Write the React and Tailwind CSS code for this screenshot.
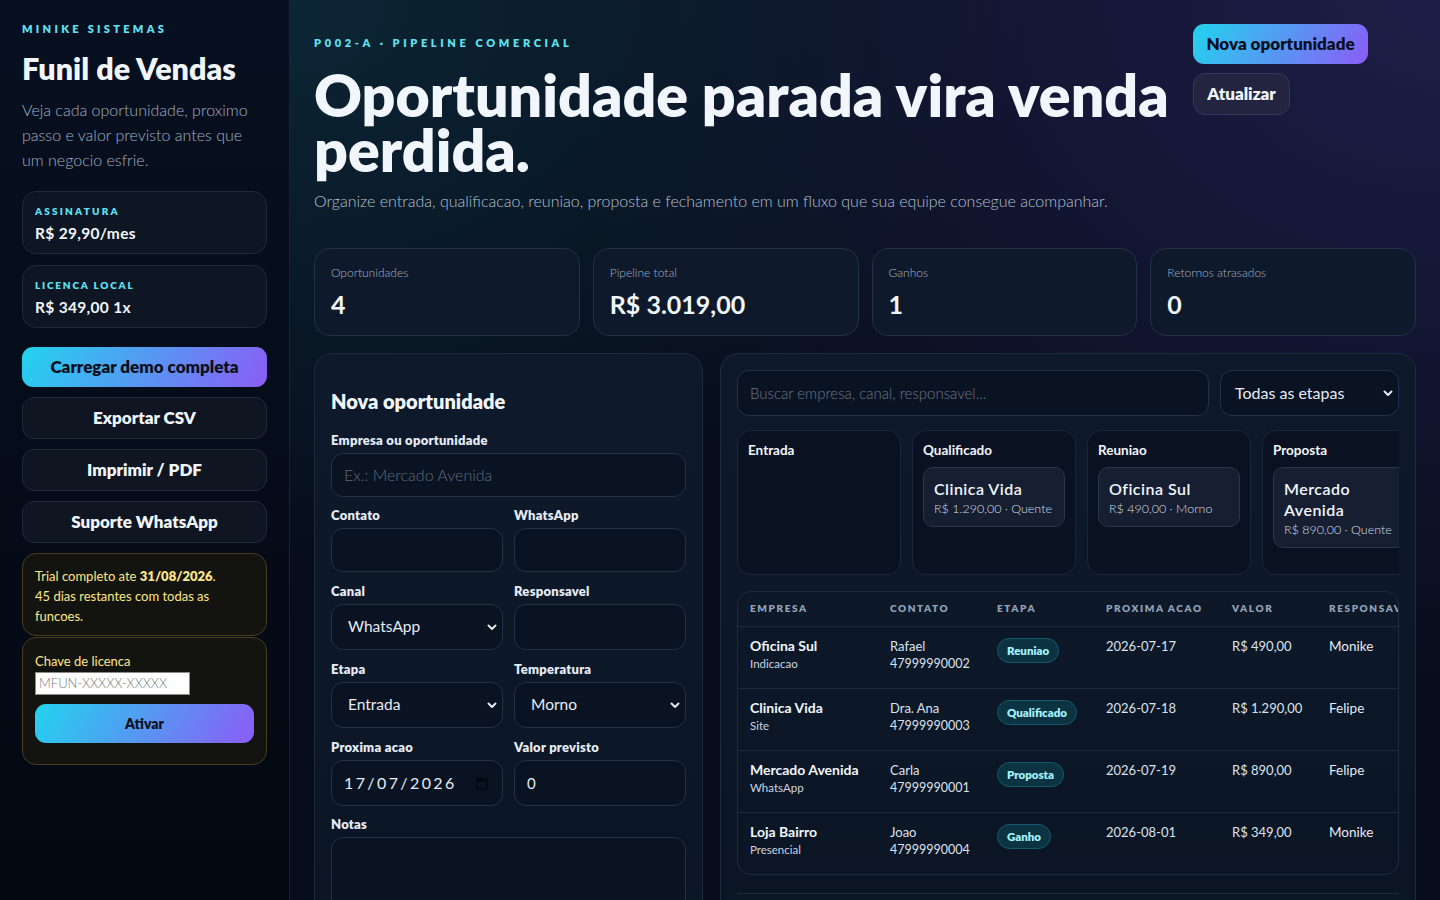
import React from "react";

const stats = [
  { label: "Oportunidades", value: "4" },
  { label: "Pipeline total", value: "R$ 3.019,00" },
  { label: "Ganhos", value: "1" },
  { label: "Retornos atrasados", value: "0" },
];

const columns = [
  { title: "Entrada", cards: [] },
  { title: "Qualificado", cards: [{ name: "Clinica Vida", meta: "R$ 1.290,00 · Quente" }] },
  { title: "Reuniao", cards: [{ name: "Oficina Sul", meta: "R$ 490,00 · Morno" }] },
  { title: "Proposta", cards: [{ name: "Mercado Avenida", meta: "R$ 890,00 · Quente" }] },
];

const rows = [
  { empresa: "Oficina Sul", canal: "Indicacao", contato: "Rafael", fone: "47999990002", etapa: "Reuniao", data: "2026-07-17", valor: "R$ 490,00", resp: "Monike" },
  { empresa: "Clinica Vida", canal: "Site", contato: "Dra. Ana", fone: "47999990003", etapa: "Qualificado", data: "2026-07-18", valor: "R$ 1.290,00", resp: "Felipe" },
  { empresa: "Mercado Avenida", canal: "WhatsApp", contato: "Carla", fone: "47999990001", etapa: "Proposta", data: "2026-07-19", valor: "R$ 890,00", resp: "Felipe" },
  { empresa: "Loja Bairro", canal: "Presencial", contato: "Joao", fone: "47999990004", etapa: "Ganho", data: "2026-08-01", valor: "R$ 349,00", resp: "Monike" },
];

function Chevron() {
  return (
    <svg width="10" height="7" viewBox="0 0 10 7" fill="none" className="shrink-0">
      <path d="M1.5 1.5L5 5l3.5-3.5" stroke="#e5e7eb" strokeWidth="2" strokeLinecap="round" strokeLinejoin="round" />
    </svg>
  );
}

function CalendarIcon() {
  return (
    <svg width="12" height="13" viewBox="0 0 12 13" fill="none">
      <rect x="1" y="2" width="10" height="10" stroke="#05070c" strokeWidth="1.4" />
      <rect x="1" y="2" width="10" height="2.5" fill="#05070c" />
    </svg>
  );
}

function Label({ children }) {
  return <div className="text-[13px] leading-[16px] font-extrabold tracking-[0.02em] text-[#e5ecf5]">{children}</div>;
}

function TextField({ label, placeholder, value, h = "h-[44px]" }) {
  return (
    <div className="flex flex-col gap-[5px]">
      <Label>{label}</Label>
      <div className={`${h} rounded-[12px] border border-[#243247] bg-[#0a1322] px-[12px] flex items-center text-[15px]`}>
        {placeholder ? (
          <span className="text-[16px] font-light text-[#5f6b7e]">{placeholder}</span>
        ) : (
          <span className="text-[#e5ecf5]">{value}</span>
        )}
      </div>
    </div>
  );
}

function SelectField({ label, value }) {
  return (
    <div className="flex flex-col gap-[5px]">
      <Label>{label}</Label>
      <div className="h-[46px] rounded-[12px] border border-[#243247] bg-[#0a1322] pl-[16px] pr-[5px] flex items-center justify-between text-[15.5px] text-[#e5ecf5]">
        <span>{value}</span>
        <Chevron />
      </div>
    </div>
  );
}

function Sidebar() {
  return (
    <aside className="w-[290px] shrink-0 h-full border-r border-[#182231] bg-[linear-gradient(180deg,#071020,#030912)] px-[22px] pt-[21px] flex flex-col">
      <div className="text-[11px] leading-[16px] font-extrabold tracking-[0.3em] text-[#5fe3f3]">MINIKE SISTEMAS</div>
      <h1 className="mt-[13px] text-[30.5px] leading-[36px] font-extrabold text-[#f1f6fc]">Funil de Vendas</h1>
      <p className="mt-[11px] text-[16px] leading-[25px] font-light text-[#a2afc2]">
        Veja cada oportunidade, proximo passo e valor previsto antes que um negocio esfrie.
      </p>

      <div className="mt-[19px] rounded-[14px] border border-[#1f2a3a] bg-[#0e1623] px-[12px] pt-[12px] pb-[10px]">
        <div className="text-[10px] leading-[14px] font-extrabold tracking-[0.22em] text-[#5fe3f3]">ASSINATURA</div>
        <div className="mt-[5px] text-[15.5px] leading-[20px] font-bold tracking-[0.02em] text-[#f1f6fc]">R$ 29,90/mes</div>
      </div>
      <div className="mt-[11px] rounded-[14px] border border-[#1f2a3a] bg-[#0e1623] px-[12px] pt-[12px] pb-[10px]">
        <div className="text-[10px] leading-[14px] font-extrabold tracking-[0.18em] text-[#5fe3f3]">LICENCA LOCAL</div>
        <div className="mt-[5px] text-[15.5px] leading-[20px] font-bold tracking-[0.02em] text-[#f1f6fc]">R$ 349,00 1x</div>
      </div>

      <button className="mt-[19px] h-[40px] rounded-[11px] bg-[linear-gradient(120deg,#22d3ee,#8b5cf6)] text-[17px] font-extrabold text-[#0a1020]">
        Carregar demo completa
      </button>
      {["Exportar CSV", "Imprimir / PDF", "Suporte WhatsApp"].map((t) => (
        <button
          key={t}
          className="mt-[10px] h-[42px] rounded-[12px] border border-[#1f2a3a] bg-[#0f1622] text-[17px] font-extrabold text-[#f1f6fc]"
        >
          {t}
        </button>
      ))}

      <div className="mt-[10px] rounded-[14px] border border-[#4a3d1c] bg-[#13140f] px-[12px] pt-[12px] pb-[9px] text-[13px] leading-[20px] text-[#fde68a]">
        Trial completo ate <b className="font-extrabold">31/08/2026</b>.
        <br />
        45 dias restantes com todas as funcoes.
      </div>
      <div className="mt-[1px] rounded-[14px] border border-[#4a3d1c] bg-[#13140f] px-[12px] pt-[13px] pb-[21px]">
        <div className="text-[13px] leading-[20px] text-[#fde68a]">Chave de licenca</div>
        <div className="mt-[1px] h-[23px] w-[155px] border border-[#8a8a8a] bg-white px-[3px] flex items-center text-[13px] font-light text-[#7a7a7a]">
          MFUN-XXXXX-XXXXX
        </div>
        <button className="mt-[9px] w-full h-[39px] rounded-[11px] bg-[linear-gradient(120deg,#22d3ee,#8b5cf6)] text-[14px] font-extrabold text-[#0a1020]">
          Ativar
        </button>
      </div>
    </aside>
  );
}

function Header() {
  return (
    <div className="flex gap-[20px]">
      <div className="flex-1 min-w-0 pt-[11px]">
        <div className="text-[11px] leading-[16px] font-extrabold tracking-[0.33em] text-[#5fe3f3]">P002-A · PIPELINE COMERCIAL</div>
        <h2 className="mt-[16px] text-[59px] leading-[55px] font-extrabold text-[#f1f6fc]">
          Oportunidade parada vira venda perdida.
        </h2>
        <p className="mt-[12px] text-[16px] leading-[24px] font-light text-[#b4c0d0]">
          Organize entrada, qualificacao, reuniao, proposta e fechamento em um fluxo que sua equipe consegue acompanhar.
        </p>
      </div>
      <div className="w-[223px] shrink-0 flex flex-col items-start gap-[9px]">
        <button className="h-[40px] w-[175px] rounded-[11px] bg-[linear-gradient(120deg,#22d3ee,#8b5cf6)] text-[17px] font-extrabold text-[#0a1020]">
          Nova oportunidade
        </button>
        <button className="h-[42px] w-[97px] rounded-[12px] border border-[#34365a] bg-[#23243f] text-[17px] font-extrabold text-[#f1f6fc]">
          Atualizar
        </button>
      </div>
    </div>
  );
}

function Stats() {
  return (
    <div className="mt-[35px] grid grid-cols-4 gap-[13px]">
      {stats.map((s) => (
        <div key={s.label} className="h-[88px] rounded-[16px] border border-[#223047] bg-[#0e1a2b] px-[16px] pt-[16px]">
          <div className="text-[12px] leading-[16px] font-light text-[#a5b1c2]">{s.label}</div>
          <div className="mt-[8px] text-[25px] leading-[30px] font-bold text-[#f1f6fc]">{s.value}</div>
        </div>
      ))}
    </div>
  );
}

function FormPanel() {
  return (
    <div className="rounded-[18px] border border-[#1f2b3d] bg-[linear-gradient(180deg,#0e1a2b,#0b1524)] px-[16px] pt-[34px] pb-[20px]">
      <h3 className="text-[20px] leading-[26px] font-extrabold text-[#f1f6fc]">Nova oportunidade</h3>
      <div className="mt-[18px] flex flex-col gap-[10px]">
        <TextField label="Empresa ou oportunidade" placeholder="Ex.: Mercado Avenida" />
        <div className="grid grid-cols-2 gap-x-[11px] gap-y-[11px]">
          <TextField label="Contato" value="" />
          <TextField label="WhatsApp" value="" />
          <SelectField label="Canal" value="WhatsApp" />
          <TextField label="Responsavel" value="" h="h-[46px]" />
          <SelectField label="Etapa" value="Entrada" />
          <SelectField label="Temperatura" value="Morno" />
          <div className="flex flex-col gap-[5px]">
            <Label>Proxima acao</Label>
            <div className="h-[46px] rounded-[12px] border border-[#243247] bg-[#0a1322] pl-[12px] pr-[14px] flex items-center justify-between text-[16px] text-[#e5ecf5]">
              <span className="tracking-[0.15em]">17/07/2026</span>
              <CalendarIcon />
            </div>
          </div>
          <TextField label="Valor previsto" value="0" h="h-[46px]" />
        </div>
        <div className="flex flex-col gap-[5px]">
          <Label>Notas</Label>
          <div className="h-[110px] rounded-[12px] border border-[#243247] bg-[#0a1322]" />
        </div>
      </div>
    </div>
  );
}

function Badge({ children }) {
  return (
    <span className="inline-flex h-[25px] items-center rounded-full border border-[#175a6c] bg-[#0b3342] px-[9px] text-[11.5px] font-extrabold text-[#a5f3fc]">
      {children}
    </span>
  );
}

function BoardPanel() {
  return (
    <div className="rounded-[18px] border border-[#1f2b3d] bg-[linear-gradient(180deg,#0e1a2b,#0b1524)] px-[16px] pt-[16px] pb-[20px] min-w-0">
      <div className="flex gap-[11px]">
        <div className="flex-1 h-[46px] rounded-[12px] border border-[#243247] bg-[#0a1322] px-[12px] flex items-center text-[15px] font-light text-[#6b7689]">
          Buscar empresa, canal, responsavel...
        </div>
        <div className="w-[179px] h-[46px] rounded-[12px] border border-[#243247] bg-[#0a1322] pl-[14px] pr-[5px] flex items-center justify-between text-[16px] text-[#e5ecf5]">
          <span>Todas as etapas</span>
          <Chevron />
        </div>
      </div>

      <div className="mt-[14px] flex gap-[11px] overflow-hidden">
        {columns.map((c) => (
          <div key={c.title} className="w-[164px] h-[145px] shrink-0 rounded-[14px] border border-[#1c2638] bg-[#0a1120] px-[10px] pt-[10px]">
            <div className="text-[13.5px] leading-[18px] font-bold text-[#f1f6fc]">{c.title}</div>
            {c.cards.map((k) => (
              <div key={k.name} className="mt-[8px] rounded-[10px] border border-[#2a3649] bg-[#161f31] px-[10px] pt-[10px] pb-[8px]">
                <div className="text-[16px] leading-[21px] font-semibold tracking-[0.03em] text-[#f1f6fc]">{k.name}</div>
                <div className="mt-[1px] text-[12.5px] leading-[18px] font-light text-[#d5dde8]">{k.meta}</div>
              </div>
            ))}
          </div>
        ))}
      </div>

      <div className="mt-[16px] rounded-[14px] border border-[#1f2b3d] overflow-hidden">
        <table className="w-[790px] table-fixed border-collapse text-left">
          <colgroup>
            <col className="w-[152px]" />
            <col className="w-[107px]" />
            <col className="w-[109px]" />
            <col className="w-[126px]" />
            <col className="w-[97px]" />
            <col className="w-[199px]" />
          </colgroup>
          <thead>
            <tr className="h-[34px] text-[10px] font-extrabold tracking-[0.16em] text-[#94a3b8]">
              <th className="pl-[12px] font-extrabold">EMPRESA</th>
              <th className="font-extrabold">CONTATO</th>
              <th className="font-extrabold">ETAPA</th>
              <th className="font-extrabold">PROXIMA ACAO</th>
              <th className="font-extrabold">VALOR</th>
              <th className="font-extrabold">RESPONSAVEL</th>
            </tr>
          </thead>
          <tbody>
            {rows.map((r) => (
              <tr key={r.empresa} className="h-[62px] border-t border-[#1f2b3d] align-top">
                <td className="pl-[12px] pt-[10px]">
                  <div className="text-[14px] leading-[18px] font-bold text-[#f1f6fc]">{r.empresa}</div>
                  <div className="text-[11.5px] leading-[18px] text-[#cbd5e1]">{r.canal}</div>
                </td>
                <td className="pt-[10px]">
                  <div className="text-[13px] leading-[18px] text-[#dbe3ee]">{r.contato}</div>
                  <div className="text-[12.5px] leading-[18px] text-[#dbe3ee]">{r.fone}</div>
                </td>
                <td className="pt-[10px]">
                  <Badge>{r.etapa}</Badge>
                </td>
                <td className="pt-[10px] text-[13px] leading-[18px] text-[#dbe3ee]">{r.data}</td>
                <td className="pt-[10px] text-[13px] leading-[18px] text-[#dbe3ee]">{r.valor}</td>
                <td className="pt-[10px] text-[13.5px] leading-[18px] text-[#e5ecf5]">{r.resp}</td>
              </tr>
            ))}
          </tbody>
        </table>
      </div>

      <div className="mt-[18px] h-[40px] border-t border-[#1f2b3d]" />
    </div>
  );
}

export default function App() {
  return (
    <div className="flex h-screen overflow-hidden font-['Lato','Noto_Sans',sans-serif] text-[#f1f6fc]">
      <Sidebar />
      <main className="flex-1 min-w-0 h-full overflow-hidden px-[24px] pt-[24px] bg-[#070d1a] bg-[radial-gradient(ellipse_at_0%_0%,rgba(16,58,76,0.55),transparent_45%),radial-gradient(ellipse_at_100%_0%,rgba(58,50,130,0.45),transparent_55%)]">
        <Header />
        <Stats />
        <div className="mt-[17px] grid grid-cols-[389px_1fr] gap-[17px] items-start">
          <FormPanel />
          <BoardPanel />
        </div>
      </main>
    </div>
  );
}
